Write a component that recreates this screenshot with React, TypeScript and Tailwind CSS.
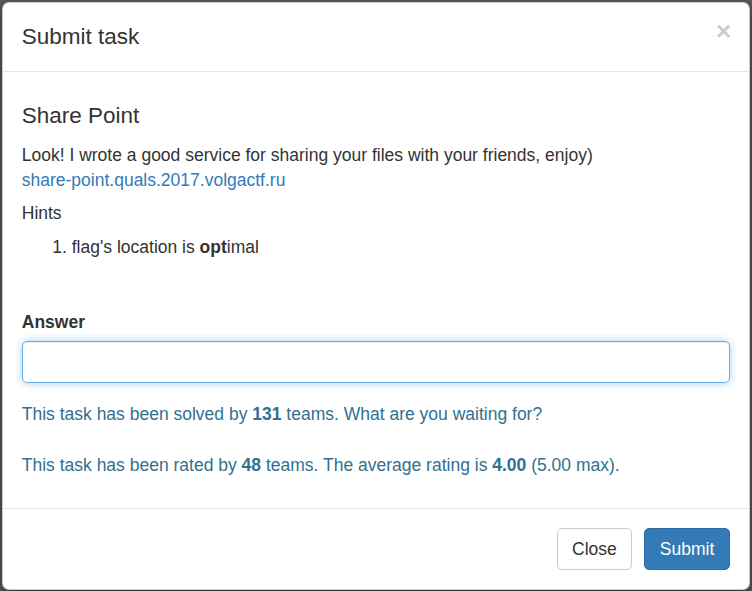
export default function App() {
  return (
    <div className="w-[752px] h-[591px] bg-[#5a5a5a] pt-[2px] pl-[2px] overflow-hidden font-['Liberation_Sans',Arial,sans-serif] text-[#333] text-[17.5px] leading-[25px]">
      <div className="w-[748px] bg-white border border-[rgba(0,0,0,0.2)] rounded-[7px] shadow-[0_4px_12px_rgba(0,0,0,0.5)]">
        {/* Header */}
        <div className="flex items-start justify-between px-[18.75px] pt-[17.5px] pb-[18.5px] border-b border-[#e5e5e5]">
          <h4 className="text-[22.5px] leading-[32.14px]">Submit task</h4>
          <button className="text-[26px] leading-none font-bold text-black opacity-20 -mt-[3px] -mr-[1px]">×</button>
        </div>

        {/* Body */}
        <div className="p-[18.75px]">
          <h4 className="mt-[13px] mb-[14.5px] text-[22.5px] leading-[24.75px]">Share Point</h4>
          <p className="mb-[8px]">
            Look! I wrote a good service for sharing your files with your friends, enjoy)
            <br />
            <a className="text-[#337ab7]">share-point.quals.2017.volgactf.ru</a>
          </p>
          <p className="mb-[9px]">Hints</p>
          <ol className="list-decimal pl-[50px]">
            <li>
              flag's location is <b>opt</b>imal
            </li>
          </ol>

          <label className="block mt-[50px] mb-[6.25px] font-bold">Answer</label>
          <input
            type="text"
            className="block w-full h-[42px] rounded-[5px] border border-[#66afe9] outline-none px-[15px] shadow-[inset_0_1px_1px_rgba(0,0,0,0.075),0_0_8px_rgba(102,175,233,0.6)]"
          />

          <p className="mt-[18.75px] text-[#31708f]">
            This task has been solved by <b>131</b> teams. What are you waiting for?
          </p>
          <p className="mt-[26px] mb-[11.5px] text-[#31708f]">
            This task has been rated by <b>48</b> teams. The average rating is <b>4.00</b> (5.00 max).
          </p>
        </div>

        {/* Footer */}
        <div className="flex justify-end gap-[12px] p-[18.75px] border-t border-[#e5e5e5]">
          <button className="h-[42px] px-[14px] rounded-[5px] border border-[#ccc] bg-white text-[#333]">Close</button>
          <button className="h-[42px] px-[15px] rounded-[5px] border border-[#2e6da4] bg-[#337ab7] text-white">Submit</button>
        </div>
      </div>
    </div>
  )
}
